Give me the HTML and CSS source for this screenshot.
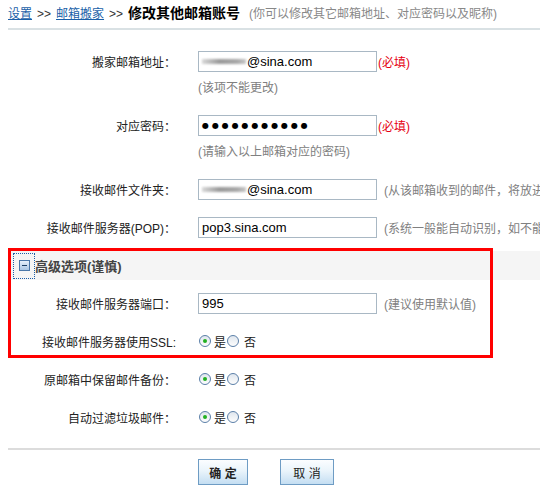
FILE: index.html
```html
<!DOCTYPE html>
<html lang="zh-CN">
<head>
<meta charset="UTF-8" />
<title>修改其他邮箱账号</title>
<link rel="stylesheet" href="styles.css">
</head>
<body>
<div class="page">

  <div class="crumbs">
    <a href="#">设置</a><span class="sep">&gt;&gt;</span><a href="#">邮箱搬家</a><span class="sep">&gt;&gt;</span><strong>修改其他邮箱账号</strong><span class="tip">(你可以修改其它邮箱地址、对应密码以及昵称)</span>
  </div>

  <div class="form">
    <div class="row">
      <label>搬家邮箱地址：</label>
      <div class="field"><div class="input"><span class="masked"></span>@sina.com</div><span class="must">(必填)</span></div>
    </div>
    <div class="hint-row"><span class="hint">(该项不能更改)</span></div>

    <div class="row">
      <label>对应密码：</label>
      <div class="field"><div class="input pwd">●●●●●●●●●●●</div><span class="must">(必填)</span></div>
    </div>
    <div class="hint-row"><span class="hint">(请输入以上邮箱对应的密码)</span></div>

    <div class="row">
      <label>接收邮件文件夹：</label>
      <div class="field"><div class="input"><span class="masked"></span>@sina.com</div><span class="hint side">(从该邮箱收到的邮件，将放进此文件夹)</span></div>
    </div>

    <div class="row">
      <label>接收邮件服务器(POP)：</label>
      <div class="field"><div class="input">pop3.sina.com</div><span class="hint side">(系统一般能自动识别，如不能识别请手动填写)</span></div>
    </div>

    <div class="advanced">
      <div class="band">
        <span class="toggle"><span class="minus"></span></span>高级选项(谨慎)
      </div>
      <div class="row">
        <label>接收邮件服务器端口：</label>
        <div class="field"><div class="input">995</div><span class="hint side">(建议使用默认值)</span></div>
      </div>
      <div class="row">
        <label>接收邮件服务器使用SSL:</label>
        <div class="field choice"><span class="radio on"></span>是<span class="radio"></span>否</div>
      </div>
    </div>

    <div class="row">
      <label>原邮箱中保留邮件备份：</label>
      <div class="field choice"><span class="radio on"></span>是<span class="radio"></span>否</div>
    </div>
    <div class="row">
      <label>自动过滤垃圾邮件：</label>
      <div class="field choice"><span class="radio on"></span>是<span class="radio"></span>否</div>
    </div>
  </div>

  <div class="actions">
    <button class="btn ok">确 定</button>
    <button class="btn">取 消</button>
  </div>

</div>
</body>
</html>
```

FILE: styles.css
```css
html {
  overflow: hidden;
}
body {
  margin: 0;
  background: #fff;
  font-family: "Liberation Sans", "Noto Sans CJK SC", sans-serif;
  font-size: 12px;
  color: #222;
}
.page {
  width: 700px;
  padding-left: 8px;
}
.crumbs {
  height: 28px;
  line-height: 26px;
  border-bottom: 2px solid #d9e1e4;
  white-space: nowrap;
}
.crumbs a {
  color: #1a5fa8;
  text-decoration: underline;
}
.crumbs .sep {
  margin: 0 5px;
  color: #333;
}
.crumbs strong {
  font-size: 14px;
  color: #000;
}
.crumbs .tip {
  color: #888;
  margin-left: 9px;
}
.form {
  padding-top: 12px;
}
.row {
  display: grid;
  grid-template-columns: 168px 1fr;
  column-gap: 22px;
  align-items: center;
  height: 38px;
}
.row label {
  text-align: right;
  color: #222;
  white-space: nowrap;
}
.field {
  display: flex;
  align-items: center;
  white-space: nowrap;
}
.input {
  box-sizing: border-box;
  width: 179px;
  height: 21px;
  border: 1px solid #a9b8c4;
  padding-left: 3px;
  font-size: 13px;
  line-height: 19px;
  color: #000;
  display: flex;
  align-items: center;
}
.input.pwd {
  font-family: "DejaVu Sans", sans-serif;
  font-size: 8px;
  letter-spacing: 2.9px;
}
.masked {
  display: inline-block;
  width: 44px;
  height: 5px;
  margin-right: 1px;
  background: linear-gradient(90deg, #d8d8d8, #9a9a9a 40%, #a8a8a8 80%, #c8c8c8);
  filter: blur(1px);
}
.must {
  color: #e60012;
  margin-left: 1px;
}
.hint {
  color: #808080;
}
.hint.side {
  margin-left: 7px;
}
.hint-row {
  height: 26px;
  padding-left: 190px;
  line-height: 16px;
}
.advanced {
  position: relative;
  margin-top: 5px;
}
.advanced::after {
  content: "";
  position: absolute;
  left: 0;
  top: -3px;
  width: 485px;
  height: 110px;
  border: 3px solid #ff0000;
  box-sizing: border-box;
  pointer-events: none;
}
.band {
  height: 29px;
  background: #f5f5f5;
  display: flex;
  align-items: center;
  font-size: 13px;
  font-weight: bold;
  color: #444;
  margin-bottom: 4px;
}
.toggle {
  box-sizing: border-box;
  width: 22px;
  height: 26px;
  margin-left: 5px;
  border: 1px dotted #1d5ea8;
  display: flex;
  align-items: center;
  justify-content: center;
}
.minus {
  box-sizing: border-box;
  width: 11px;
  height: 11px;
  border: 1px solid #4a77a8;
  background: linear-gradient(#e6f0fa, #a9c6e4);
  position: relative;
}
.minus::after {
  content: "";
  position: absolute;
  left: 2px;
  right: 2px;
  top: 4px;
  height: 1px;
  background: #1c3f66;
}
.choice {
  padding-left: 1px;
}
.radio {
  box-sizing: border-box;
  width: 12px;
  height: 12px;
  border-radius: 50%;
  border: 1px solid #5b7fa8;
  background: linear-gradient(#dfe6ee, #fdfdfd);
  margin-right: 3px;
  display: flex;
  align-items: center;
  justify-content: center;
}
.choice .radio:nth-of-type(2) {
  margin-left: 1px;
  margin-right: 5px;
}
.radio.on::after {
  content: "";
  width: 4px;
  height: 4px;
  border-radius: 50%;
  background: #22b022;
}
.actions {
  margin-top: 12px;
  border-top: 2px solid #dcdcdc;
  padding: 9px 0 0 190px;
  display: flex;
  gap: 32px;
}
.btn {
  box-sizing: border-box;
  height: 26px;
  width: 50px;
  padding: 0;
  border: 1px solid #6e9cc4;
  background: linear-gradient(#fbfdff, #eaf4fb 45%, #c4def2);
  font-family: "Liberation Sans", "Noto Sans CJK SC", sans-serif;
  font-size: 12px;
  color: #222;
}
.btn.ok {
  font-weight: bold;
}
.btn + .btn {
  width: 54px;
}
```
